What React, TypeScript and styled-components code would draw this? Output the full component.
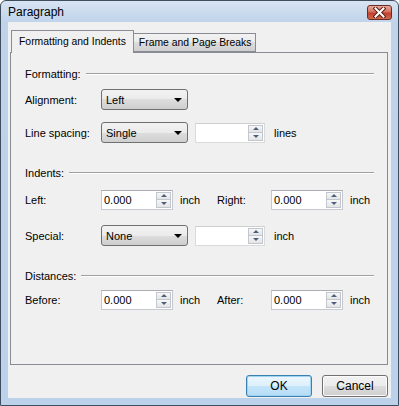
import React, { FC } from "react";
import styled, { createGlobalStyle } from "styled-components";

const GlobalStyle = createGlobalStyle`
  html, body {
    margin: 0;
    padding: 0;
    background: #ffffff;
  }
  body {
    font-family: "Liberation Sans", Arial, sans-serif;
    font-size: 11px;
    color: #000;
  }
`;

const Window = styled.div`
  width: 399px;
  height: 406px;
  box-sizing: border-box;
  border: 1px solid #3f4d5e;
  border-radius: 6px 6px 0 0;
  background: linear-gradient(#d7e4f2, #bfd3eb 22px, #bcd1ea);
  display: flex;
  flex-direction: column;
  padding: 0 7px 7px;
`;

const TitleBar = styled.div`
  height: 21px;
  display: flex;
  align-items: center;
  justify-content: space-between;
`;

const Title = styled.span`
  font-size: 12px;
  color: #000;
`;

const CloseButton = styled.div`
  width: 25px;
  height: 15px;
  box-sizing: border-box;
  margin-top: 2px;
  margin-right: -1px;
  border: 1px solid #6b2a22;
  border-radius: 3px;
  background: linear-gradient(#e9a99b, #d5705e 45%, #c2402e 55%, #cf6a4f);
  display: flex;
  align-items: center;
  justify-content: center;
`;

const Client = styled.div`
  flex: 1;
  background: #f0f0f0;
  padding: 7px 3px 0 2px;
  display: flex;
  flex-direction: column;
`;

const TabRow = styled.div`
  display: flex;
  align-items: flex-end;
  height: 23px;
  padding-left: 1px;
  position: relative;
  z-index: 1;
`;

const Tab = styled.div<{ $active?: boolean }>`
  box-sizing: border-box;
  height: ${(p) => (p.$active ? "23px" : "19px")};
  border: 1px solid #898c95;
  border-bottom: ${(p) => (p.$active ? "none" : "1px solid #898c95")};
  border-left: ${(p) => (p.$active ? "1px solid #898c95" : "none")};
  background: ${(p) =>
    p.$active
      ? "#f0f0f0"
      : "linear-gradient(#f2f2f2, #ebebeb 50%, #dddddd 50%, #cfcfcf)"};
  padding: ${(p) => (p.$active ? "4px 7px 0 7px" : "2px 4px 0 5px")};
  margin-bottom: ${(p) => (p.$active ? "-1px" : "0")};
  line-height: 14px;
  font-size: 10.4px;
  white-space: nowrap;
`;

const Panel = styled.div`
  height: 313px;
  box-sizing: border-box;
  border: 1px solid #898c95;
  background: #f0f0f0;
  padding: 14px 13px 0 14px;
  display: flex;
  flex-direction: column;
`;

const SectionHeader = styled.div<{ $gap: number }>`
  display: flex;
  align-items: center;
  height: 14px;
  margin-top: ${(p) => p.$gap}px;
  gap: 5px;
  &::after {
    content: "";
    flex: 1;
    height: 0;
    border-top: 1px solid #a0a0a0;
    border-bottom: 1px solid #ffffff;
  }
`;

const Row = styled.div<{ $gap: number }>`
  display: flex;
  align-items: center;
  height: 21px;
  margin-top: ${(p) => p.$gap}px;
`;

const Label = styled.span<{ $w: number }>`
  width: ${(p) => p.$w}px;
  flex: none;
  white-space: nowrap;
`;

const Combo = styled.div`
  width: 87px;
  height: 21px;
  box-sizing: border-box;
  border: 1px solid #707070;
  border-radius: 3px;
  background: linear-gradient(#f2f2f2, #ebebeb 50%, #dddddd 50%, #cfcfcf);
  display: flex;
  align-items: center;
  justify-content: space-between;
  padding: 0 5px 0 4px;
  flex: none;
  &::after {
    content: "";
    border-left: 4px solid transparent;
    border-right: 4px solid transparent;
    border-top: 4px solid #000;
    margin-top: 1px;
  }
`;

const SpinBox = styled.div<{ $w: number; $disabled?: boolean }>`
  width: ${(p) => p.$w}px;
  height: 20px;
  box-sizing: border-box;
  border: 1px solid ${(p) => (p.$disabled ? "#dadada" : "#c5c8cf")};
  border-top-color: ${(p) => (p.$disabled ? "#cfcfcf" : "#abadb3")};
  background: #ffffff;
  display: flex;
  align-items: stretch;
  flex: none;
`;

const SpinText = styled.span`
  flex: 1;
  padding-left: 2px;
  display: flex;
  align-items: center;
`;

const SpinButtons = styled.div`
  width: 15px;
  display: flex;
  flex-direction: column;
  padding: 1px 1px 1px 0;
`;

const SpinHalf = styled.div<{ $down?: boolean }>`
  flex: 1;
  box-sizing: border-box;
  border: 1px solid #c1c6cf;
  border-top-width: ${(p) => (p.$down ? "0" : "1px")};
  background: linear-gradient(#f7f7f7, #e4e4e4);
  display: flex;
  align-items: center;
  justify-content: center;
  &::after {
    content: "";
    border-left: 3px solid transparent;
    border-right: 3px solid transparent;
    ${(p) =>
      p.$down
        ? "border-top: 3px solid #4c607e;"
        : "border-bottom: 3px solid #4c607e;"}
  }
`;

const Unit = styled.span<{ $ml: number; $w?: number }>`
  margin-left: ${(p) => p.$ml}px;
  width: ${(p) => (p.$w ? `${p.$w}px` : "auto")};
  flex: none;
`;

const Footer = styled.div`
  display: flex;
  justify-content: flex-end;
  gap: 10px;
  margin-top: 10px;
`;

const Button = styled.div<{ $default?: boolean }>`
  width: 66px;
  height: 22px;
  box-sizing: border-box;
  border: 1px solid ${(p) => (p.$default ? "#3c7fb1" : "#707070")};
  border-radius: 3px;
  background: ${(p) =>
    p.$default
      ? "linear-gradient(#ecf6fd, #dcf0fc 50%, #c4e5f9 50%, #b5dcf5)"
      : "linear-gradient(#f2f2f2, #ebebeb 50%, #dddddd 50%, #cfcfcf)"};
  box-shadow: ${(p) => (p.$default ? "inset 0 0 0 1px #9ed3f4" : "inset 0 0 0 1px #fcfcfc")};
  display: flex;
  align-items: center;
  justify-content: center;
  font-size: 12px;
`;

const Spin: FC<{ w: number; value?: string; disabled?: boolean }> = ({ w, value, disabled }) => (
  <SpinBox $w={w} $disabled={disabled}>
    <SpinText>{value}</SpinText>
    <SpinButtons>
      <SpinHalf />
      <SpinHalf $down />
    </SpinButtons>
  </SpinBox>
);

const CloseIcon = () => (
  <svg width="13" height="11" viewBox="0 0 13 11">
    <path d="M2.5 1.5 L10.5 9.5 M10.5 1.5 L2.5 9.5" stroke="#5a1d14" strokeWidth="4" strokeLinecap="square" />
    <path d="M2.5 1.5 L10.5 9.5 M10.5 1.5 L2.5 9.5" stroke="#ffffff" strokeWidth="2" strokeLinecap="square" />
  </svg>
);

const App: FC = () => {
  return (
    <>
      <GlobalStyle />
      <Window>
        <TitleBar>
          <Title>Paragraph</Title>
          <CloseButton>
            <CloseIcon />
          </CloseButton>
        </TitleBar>
        <Client>
          <TabRow>
            <Tab $active>Formatting and Indents</Tab>
            <Tab>Frame and Page Breaks</Tab>
          </TabRow>
          <Panel>
            <SectionHeader $gap={0}>Formatting:</SectionHeader>
            <Row $gap={8}>
              <Label $w={76}>Alignment:</Label>
              <Combo>Left</Combo>
            </Row>
            <Row $gap={12}>
              <Label $w={76}>Line spacing:</Label>
              <Combo>Single</Combo>
              <Unit $ml={7}>
                <Spin w={70} disabled />
              </Unit>
              <Unit $ml={9}>lines</Unit>
            </Row>

            <SectionHeader $gap={23}>Indents:</SectionHeader>
            <Row $gap={9}>
              <Label $w={76}>Left:</Label>
              <Spin w={72} value="0.000" />
              <Unit $ml={7} $w={37}>inch</Unit>
              <Label $w={54}>Right:</Label>
              <Spin w={72} value="0.000" />
              <Unit $ml={7}>inch</Unit>
            </Row>
            <Row $gap={15}>
              <Label $w={76}>Special:</Label>
              <Combo>None</Combo>
              <Unit $ml={7}>
                <Spin w={70} disabled />
              </Unit>
              <Unit $ml={9}>inch</Unit>
            </Row>

            <SectionHeader $gap={23}>Distances:</SectionHeader>
            <Row $gap={6}>
              <Label $w={76}>Before:</Label>
              <Spin w={72} value="0.000" />
              <Unit $ml={7} $w={37}>inch</Unit>
              <Label $w={54}>After:</Label>
              <Spin w={72} value="0.000" />
              <Unit $ml={7}>inch</Unit>
            </Row>
          </Panel>
          <Footer>
            <Button $default>OK</Button>
            <Button>Cancel</Button>
          </Footer>
        </Client>
      </Window>
    </>
  );
};

export default App;
